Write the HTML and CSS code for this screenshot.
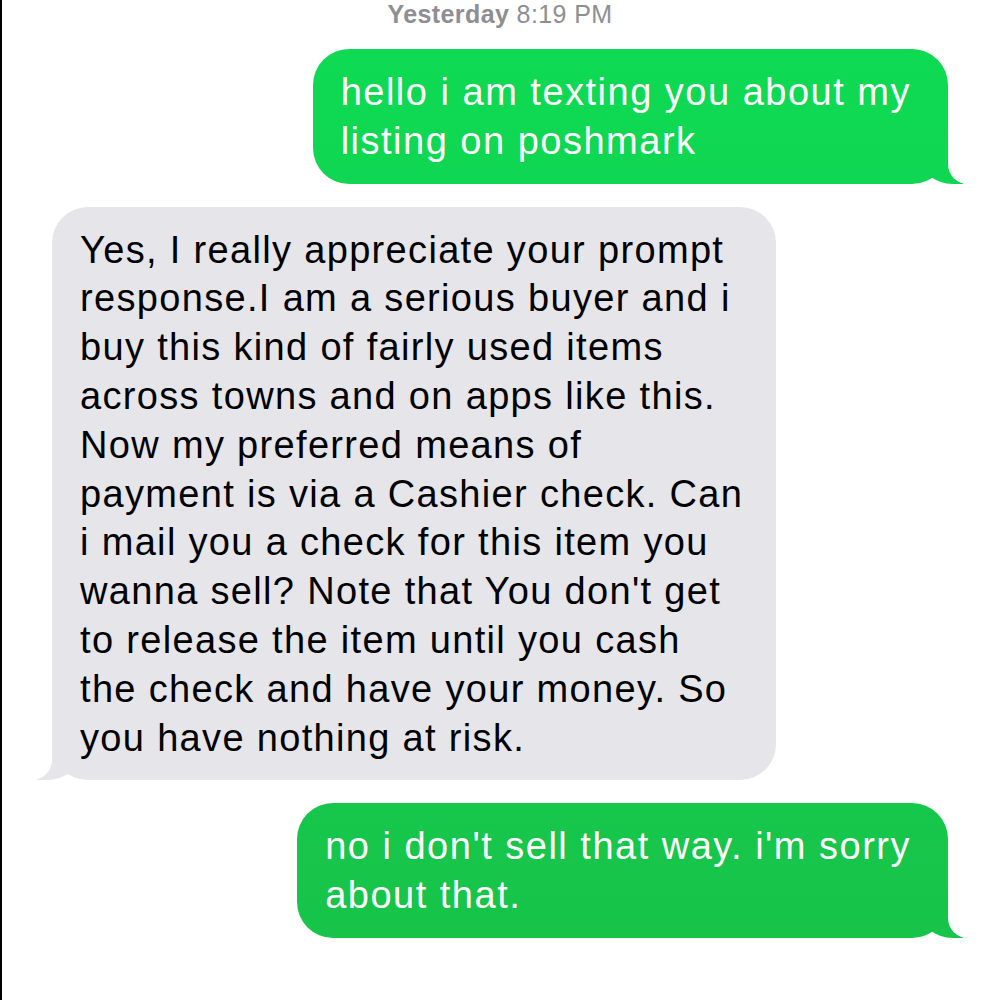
FILE: index.html
```html
<!DOCTYPE html>
<html lang="en">
  <head>
    <meta charset="UTF-8" />
    <meta name="viewport" content="width=device-width, initial-scale=1.0" />
    <title>Messages</title>
    <link rel="stylesheet" href="styles.css">
  </head>
  <body>
    <div class="thread">
      <div class="stamp"><b>Yesterday</b> 8:19 PM</div>

      <div class="msg sent">hello i am texting you about my<br>listing on poshmark</div>

      <div class="msg received">Yes, I really appreciate your prompt<br>response.I am a serious buyer and i<br>buy this kind of fairly used items<br>across towns and on apps like this.<br>Now my preferred means of<br>payment is via a Cashier check. Can<br>i mail you a check for this item you<br>wanna sell? Note that You don't get<br>to release the item until you cash<br>the check and have your money. So<br>you have nothing at risk.</div>

      <div class="msg sent">no i don't sell that way. i'm sorry<br>about that.</div>
    </div>
  </body>
</html>
```

FILE: styles.css
```css
html,
body {
  margin: 0;
  padding: 0;
  background: #fff;
}

body {
  border-left: 2px solid #000;
  min-height: 1000px;
  box-sizing: border-box;
  font-family: "Liberation Sans", Arial, sans-serif;
}

.thread {
  display: flex;
  flex-direction: column;
  padding: 0 52px 0 50px;
}

.stamp {
  text-align: center;
  font-size: 25px;
  line-height: 28px;
  letter-spacing: 0.4px;
  margin-bottom: -2px;
  color: #8e8e93;
}

.msg {
  position: relative;
  z-index: 0;
  margin-top: 23px;
  padding: 19px 33px 18px 28px;
  border-radius: 36px;
  font-size: 38px;
  line-height: 48.8px;
  letter-spacing: 1.33px;
}

.msg::before,
.msg::after {
  content: "";
  position: absolute;
  bottom: 0;
  height: 44px;
  z-index: -1;
}

/* outgoing */
.sent {
  align-self: flex-end;
  padding-right: 37px;
  letter-spacing: 1.5px;
  color: #fff;
  background: linear-gradient(#0edb54, #18c249) fixed;
}

.sent::before {
  right: -15px;
  width: 44px;
  background: inherit;
  border-bottom-left-radius: 34px 30px;
}

.sent::after {
  right: -34px;
  width: 34px;
  background: #fff;
  border-bottom-left-radius: 20px;
}

/* incoming */
.received {
  align-self: flex-start;
  color: #000;
  background: #e5e5ea;
}

.received::before {
  left: -15px;
  width: 44px;
  background: #e5e5ea;
  border-bottom-right-radius: 34px 30px;
}

.received::after {
  left: -34px;
  width: 34px;
  background: #fff;
  border-bottom-right-radius: 20px;
}
```
